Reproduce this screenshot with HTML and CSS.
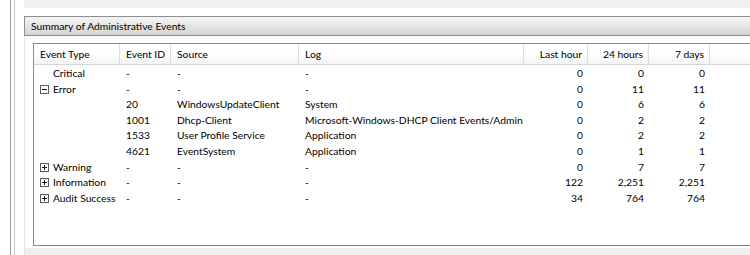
FILE: index.html
```html
<!DOCTYPE html>
<html lang="en">
<head>
  <meta charset="UTF-8">
  <title>Summary of Administrative Events</title>
  <link rel="stylesheet" href="styles.css">
</head>
<body>
<div class="frame">
  <div class="rail"></div>
  <div class="main">
    <div class="prev"></div>
    <div class="gap"></div>
    <div class="section">
      <div class="section-head">Summary of Administrative Events</div>
      <div class="section-body">
        <div class="list">
          <div class="row head">
            <div class="c">Event Type</div>
            <div class="c">Event ID</div>
            <div class="c">Source</div>
            <div class="c">Log</div>
            <div class="c num">Last hour</div>
            <div class="c num">24 hours</div>
            <div class="c num">7 days</div>
            <div class="c fill"></div>
          </div>
          <div class="row">
            <div class="c type"><span class="tw"></span>Critical</div>
            <div class="c">-</div><div class="c">-</div><div class="c">-</div>
            <div class="c num">0</div><div class="c num">0</div><div class="c num">0</div>
          </div>
          <div class="row">
            <div class="c type"><span class="tw open"></span>Error</div>
            <div class="c">-</div><div class="c">-</div><div class="c">-</div>
            <div class="c num">0</div><div class="c num">11</div><div class="c num">11</div>
          </div>
          <div class="row">
            <div class="c type"></div>
            <div class="c">20</div><div class="c">WindowsUpdateClient</div><div class="c">System</div>
            <div class="c num">0</div><div class="c num">6</div><div class="c num">6</div>
          </div>
          <div class="row">
            <div class="c type"></div>
            <div class="c">1001</div><div class="c">Dhcp-Client</div><div class="c">Microsoft-Windows-DHCP Client Events/Admin</div>
            <div class="c num">0</div><div class="c num">2</div><div class="c num">2</div>
          </div>
          <div class="row">
            <div class="c type"></div>
            <div class="c">1533</div><div class="c">User Profile Service</div><div class="c">Application</div>
            <div class="c num">0</div><div class="c num">2</div><div class="c num">2</div>
          </div>
          <div class="row">
            <div class="c type"></div>
            <div class="c">4621</div><div class="c">EventSystem</div><div class="c">Application</div>
            <div class="c num">0</div><div class="c num">1</div><div class="c num">1</div>
          </div>
          <div class="row">
            <div class="c type"><span class="tw closed"></span>Warning</div>
            <div class="c">-</div><div class="c">-</div><div class="c">-</div>
            <div class="c num">0</div><div class="c num">7</div><div class="c num">7</div>
          </div>
          <div class="row">
            <div class="c type"><span class="tw closed"></span>Information</div>
            <div class="c">-</div><div class="c">-</div><div class="c">-</div>
            <div class="c num">122</div><div class="c num">2,251</div><div class="c num">2,251</div>
          </div>
          <div class="row">
            <div class="c type"><span class="tw closed"></span>Audit Success</div>
            <div class="c">-</div><div class="c">-</div><div class="c">-</div>
            <div class="c num">34</div><div class="c num">764</div><div class="c num">764</div>
          </div>
        </div>
      </div>
    </div>
    <div class="next"></div>
  </div>
</div>
</body>
</html>
```

FILE: styles.css
```css
* {
  margin: 0;
  padding: 0;
  box-sizing: border-box;
}

body {
  width: 750px;
  height: 255px;
  overflow: hidden;
  background: #fff;
  font-family: Lato, "Noto Sans", sans-serif;
  font-size: 10.3px;
  color: #000;
}

.frame {
  display: flex;
  height: 255px;
}

/* left window edge */
.rail {
  width: 14px;
  flex: none;
  margin-left: 10px;
  border-left: 1px solid #9c9c9c;
}

.rail::after {
  content: "";
  display: block;
  width: 1px;
  height: 100%;
  margin-left: 3px;
  background: #c8c8c8;
}

.main {
  flex: 1;
  display: flex;
  flex-direction: column;
  min-width: 0;
}

.prev {
  height: 8px;
  background: #efefef;
}

.gap {
  height: 8px;
}

.section {
  flex: 1;
  display: flex;
  flex-direction: column;
}

.section-head {
  height: 20px;
  line-height: 18px;
  padding-left: 6px;
  border: 1px solid #8f8f8f;
  border-right: 0;
  background: linear-gradient(#f4f4f4, #e6e6e6 50%, #d2d2d2);
  white-space: nowrap;
}

.section-body {
  flex: 1;
  padding: 7px 0 0 8px;
  border-left: 1px solid #e4e4e4;
}

.list {
  height: 203px;
  border: 1px solid #8a8a8a;
  border-right: 0;
  background: #fff;
}

.row {
  display: grid;
  grid-template-columns: 86px 51px 128px 225px 64px 61px 61px 1fr;
  height: 15.6px;
  line-height: 15.6px;
  white-space: nowrap;
}

.row.head {
  height: 21px;
  line-height: 20px;
  margin-bottom: 1px;
  border-bottom: 1px solid #d5d5d5;
  background: linear-gradient(#fff, #fff 45%, #f3f4f6);
}

.head .c {
  border-right: 1px solid #dedede;
}

.head .c.fill {
  border-right: 0;
}

.c {
  padding: 0 6px;
  overflow: hidden;
}

.c.num {
  text-align: right;
  padding: 0 5px 0 0;
}

.c.type {
  display: flex;
  align-items: center;
}

.tw {
  width: 9px;
  height: 9px;
  margin-right: 4px;
  flex: none;
  position: relative;
}

.tw.open,
.tw.closed {
  border: 1px solid #5a5a5a;
}

.tw.open::before,
.tw.closed::before {
  content: "";
  position: absolute;
  left: 1px;
  top: 3px;
  width: 5px;
  height: 1px;
  background: #111;
}

.tw.closed::after {
  content: "";
  position: absolute;
  left: 3px;
  top: 1px;
  width: 1px;
  height: 5px;
  background: #111;
}

.next {
  height: 7px;
  background: #efefef;
  border-left: 1px solid #e4e4e4;
}
```
